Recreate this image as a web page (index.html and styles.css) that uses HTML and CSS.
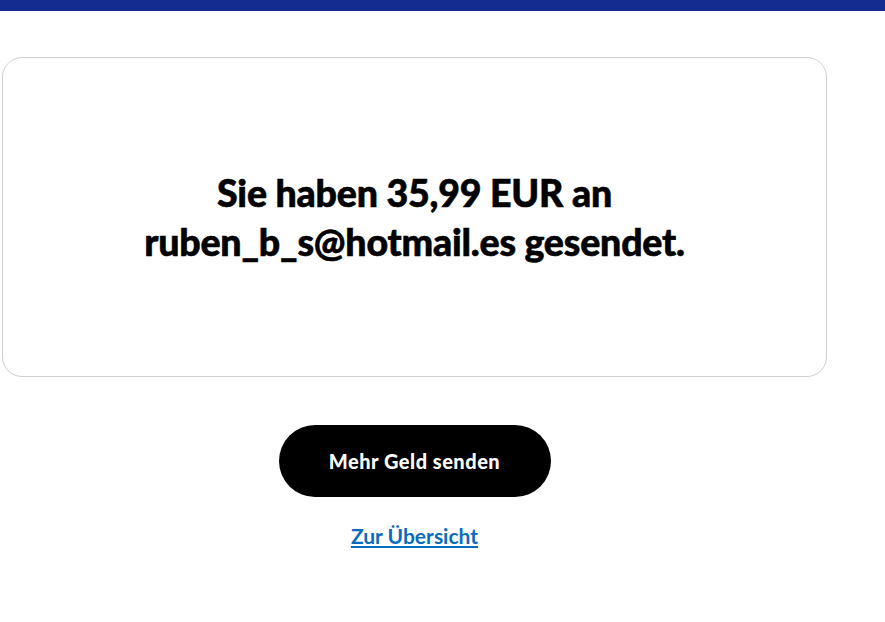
FILE: index.html
```html
<!DOCTYPE html>
<html lang="de">
<head>
  <meta charset="UTF-8" />
  <meta name="viewport" content="width=device-width, initial-scale=1.0"/>
  <title>Geld gesendet</title>

  <link rel="stylesheet" href="styles.css">
</head>
<body>

  <div class="topbar"></div>

  <div class="page">
    <div class="card">
      <h1>Sie haben 35,99 EUR an<br>ruben_b_s@hotmail.es gesendet.</h1>
    </div>

    <div class="actions">
      <a href="#" class="button">Mehr Geld senden</a>
      <a href="#" class="link">Zur Übersicht</a>
    </div>
  </div>

</body>
</html>
```

FILE: styles.css
```css
body {
  margin: 0;
  font-family: 'Lato', 'Helvetica', sans-serif;
  background-color: #FFFFFF;
  color: #000000;
}

.topbar {
  height: 11px;
  background-color: #142c8f;
}

.page {
  width: 825px;
  padding: 46px 0 0 2px;
}

.card {
  height: 320px;
  box-sizing: border-box;
  border: 1px solid #d0d0d0;
  border-radius: 20px;
  display: flex;
  justify-content: center;
  align-items: center;
  text-align: center;
}

.card h1 {
  margin: 0;
  font-size: 37.5px;
  font-weight: 900;
  line-height: 49px;
  letter-spacing: -0.2px;
  -webkit-text-stroke: 0.6px #000;
}

.actions {
  display: flex;
  flex-direction: column;
  align-items: center;
  margin-top: 48px;
}

.button {
  display: flex;
  justify-content: center;
  align-items: center;
  width: 272px;
  height: 72px;
  border-radius: 36px;
  background-color: #000000;
  color: white;
  font-size: 20px;
  font-weight: 900;
  letter-spacing: 0.5px;
  text-decoration: none;
}

.link {
  margin-top: 26px;
  color: #0a6cbf;
  font-size: 21px;
  font-weight: 700;
  text-decoration: underline;
}
```
